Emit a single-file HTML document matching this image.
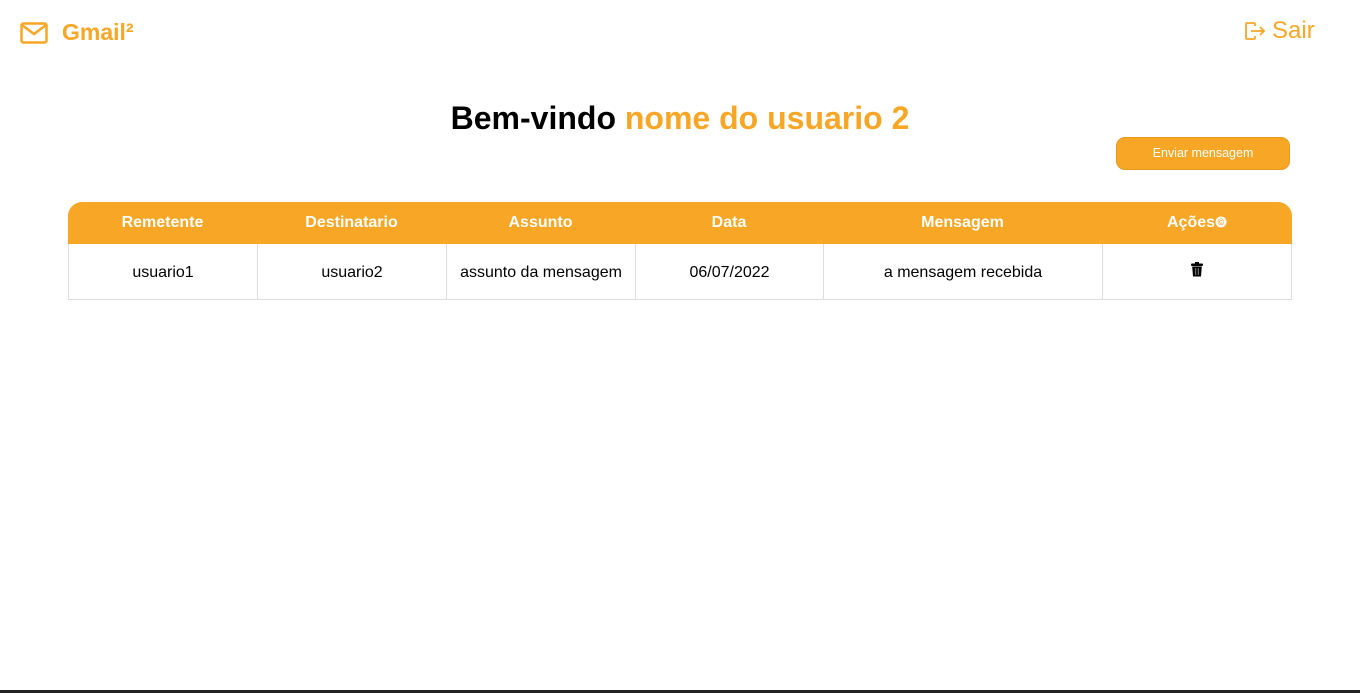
<!DOCTYPE html>
<html><head><meta charset="utf-8"><style>
body{margin:0;width:1360px;height:693px;background:#fff;font-family:"Liberation Sans",Arial,sans-serif;position:relative;overflow:hidden}
.o{color:#f8a625}
.logo{position:absolute;left:20px;top:19px;display:flex;align-items:center}
.logo span{font-weight:bold;font-size:23px;margin-left:14px}
.sair{position:absolute;left:1244px;top:17px;font-size:24px;display:flex;align-items:center}
h1{position:absolute;top:100px;left:0;width:1360px;text-align:center;margin:0;font-size:32px;font-weight:bold}
.btn{position:absolute;left:1116px;top:137px;width:172px;height:31px;background:#f8a625;border:1px solid #e69a1e;border-radius:9px;color:#fff;font-size:12.5px;text-align:center;line-height:31px}
table{position:absolute;left:68px;top:202px;border-collapse:separate;border-spacing:0;width:1224px;font-size:16px}
th{background:#f8a625;color:#fff;height:42px;padding:0;font-weight:bold}
th:first-child{border-top-left-radius:14px}
th:last-child{border-top-right-radius:14px}
td{height:52px;padding:3px 0 0;border-left:1px solid #ddd;border-bottom:1px solid #ddd;text-align:center}
td:last-child{border-right:1px solid #ddd}
.bar{position:absolute;left:0;top:690px;width:1360px;height:3px;background:#222}
</style></head><body>
<div class="logo"><svg width="28" height="24" viewBox="0 0 28 24"><rect x="1.5" y="2.5" width="25" height="19" rx="2" fill="none" stroke="#f8a625" stroke-width="2.5"/><path d="M2 4 L14 13 L26 4" fill="none" stroke="#f8a625" stroke-width="2.5"/></svg><span class="o">Gmail²</span></div>
<div class="sair o"><svg width="22" height="20" viewBox="0 0 22 20" style="margin-right:6px"><path d="M11 5 V3 Q11 2 10 2 H3 Q2 2 2 3 V17 Q2 18 3 18 H10 Q11 18 11 17 V15" fill="none" stroke="#f8a625" stroke-width="1.8"/><path d="M7 10 H20 M16 6 L20 10 L16 14" fill="none" stroke="#f8a625" stroke-width="1.8"/></svg>Sair</div>
<h1>Bem-vindo <span class="o">nome do usuario 2</span></h1>
<div class="btn">Enviar mensagem</div>
<table>
<tr><th style="width:189px">Remetente</th><th style="width:189px">Destinatario</th><th style="width:189px">Assunto</th><th style="width:188px">Data</th><th style="width:279px">Mensagem</th><th>Ações<svg width="12" height="12" viewBox="0 0 12 12" style="vertical-align:-1px"><circle cx="6" cy="6" r="5.5" fill="#fff"/><text x="6" y="9" font-size="9" font-weight="bold" text-anchor="middle" fill="#f8a625" font-family="Liberation Sans">©</text></svg></th></tr>
<tr><td>usuario1</td><td>usuario2</td><td>assunto da mensagem</td><td>06/07/2022</td><td>a mensagem recebida</td><td><svg width="12" height="15" viewBox="0 0 12 15" style="vertical-align:2px"><rect x="0" y="1.5" width="12" height="2.5" rx="1" fill="#000"/><rect x="4" y="0" width="4" height="2" fill="#000"/><path d="M1.2 4.5 H10.8 L10 14.5 H2 Z" fill="#000"/><rect x="4.2" y="6" width="1" height="7" fill="#888"/><rect x="6.8" y="6" width="1" height="7" fill="#888"/></svg></td></tr>
</table>
<div class="bar"></div>
</body></html>
